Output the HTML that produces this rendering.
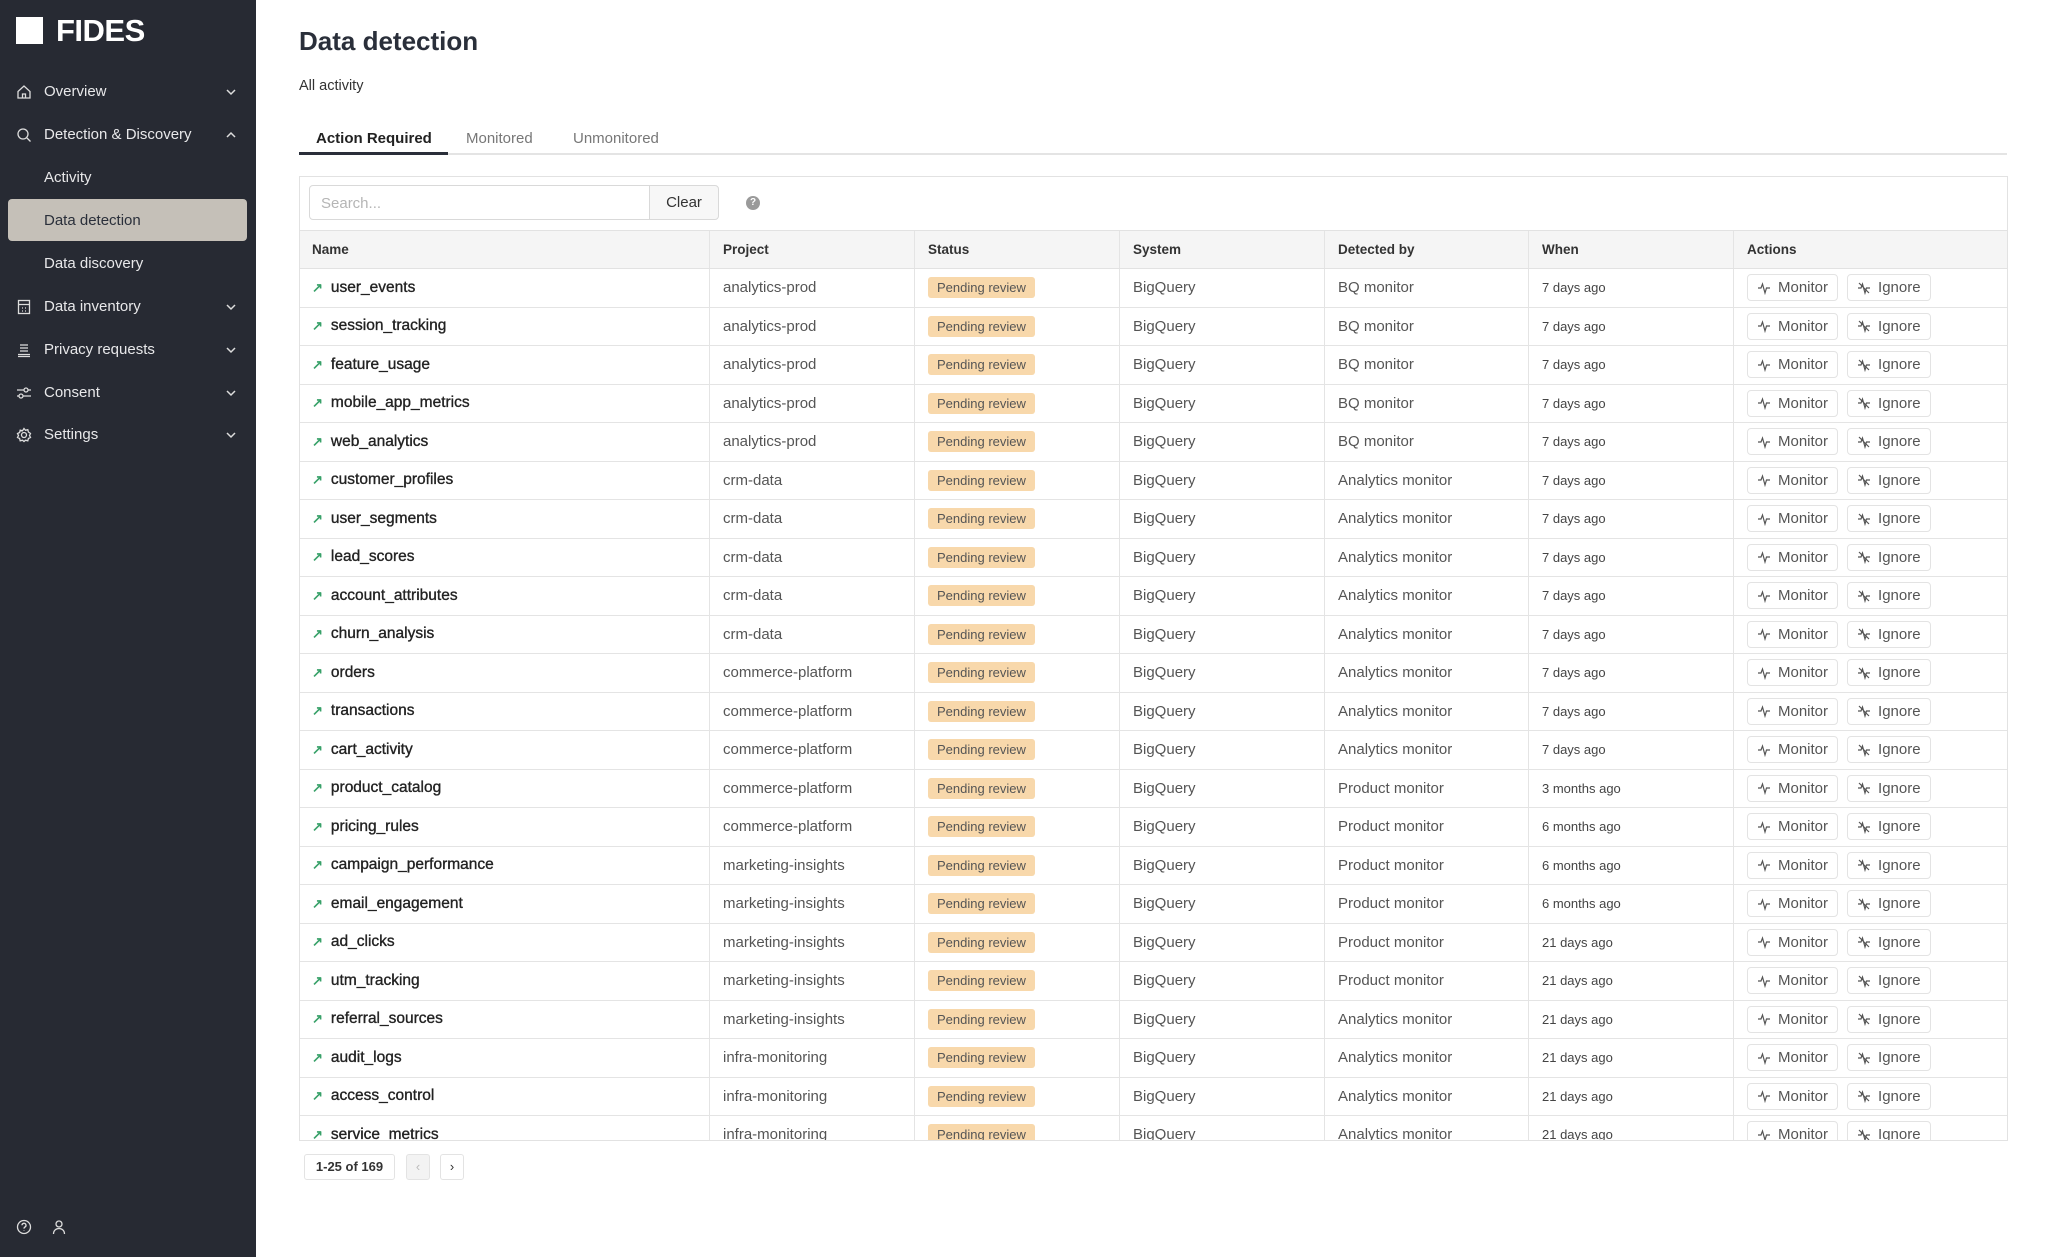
<!DOCTYPE html>
<html><head><meta charset="utf-8"><style>
*{box-sizing:border-box;margin:0;padding:0}
body{width:2048px;height:1257px;overflow:hidden;font-family:"Liberation Sans",sans-serif;background:#fff;color:#2a2f3a;position:relative}
.sb{position:absolute;left:0;top:0;width:256px;height:1257px;background:#272a33;color:#e8e8ea}
.logo{position:absolute;left:16px;top:17px;width:27px;height:27px;background:#fff}
.brand{position:absolute;left:56px;top:13px;font-size:31px;font-weight:bold;color:#fff;letter-spacing:-0.5px}
.nav{position:absolute;left:0;width:256px;height:40px;font-size:15px;line-height:40px}
.nav .t{position:absolute;left:44px}
.nav svg.i{position:absolute;left:16px;top:12px}
.nav .ch{position:absolute;left:225px;top:14px}
.hl{position:absolute;left:8px;top:199px;width:239px;height:42px;background:#c5c0b8;border-radius:4px}
h1{position:absolute;left:299px;top:26px;font-size:26px;font-weight:bold;color:#2a2f3a}
.sub{position:absolute;left:299px;top:78px;font-size:14.5px;color:#333}
.tabs{position:absolute;left:299px;top:127px;width:1708px;height:28px;border-bottom:2px solid #e4e4e4;font-size:15px}
.tabs span{position:absolute;top:3px;color:#777}
.tabs .a{color:#222;font-weight:bold;left:17px}
.ul{position:absolute;left:0;top:25px;width:149px;height:3px;background:#2a2f3a}
.box{position:absolute;left:299px;top:176px;width:1709px;height:965px;border:1.5px solid #e2e2e2;overflow:hidden}
.search{position:absolute;left:9px;top:8px;width:341px;height:35px;border:1.5px solid #d9d9d9;border-radius:4px 0 0 4px;font-size:15px;color:#b5b5b5;padding:9px 11px}
.clear{position:absolute;left:349px;top:8px;width:70px;height:35px;border:1.5px solid #d9d9d9;border-radius:0 4px 4px 0;background:#f7f7f7;font-size:15px;text-align:center;line-height:34px;color:#333}
.help{position:absolute;left:446px;top:19px;width:14px;height:14px;border-radius:50%;background:#9a9a9a;color:#fff;font-size:10px;font-weight:bold;text-align:center;line-height:14px}
.hdr{position:absolute;left:0;top:53px;width:1709px;height:39px;background:#f5f5f5;border-top:1.5px solid #e2e2e2;border-bottom:1.5px solid #e2e2e2;font-size:13.5px;font-weight:bold;color:#333}
.row{position:absolute;left:0;width:1709px;height:38.5px;border-bottom:1.5px solid #e4e4e4;font-size:15px}
.c{position:absolute;top:0;height:100%;border-right:1.5px solid #e4e4e4;padding-left:13px;display:flex;align-items:center;white-space:nowrap}
.c1{left:0;width:410px;padding-left:12px}.c2{left:410px;width:205px}.c3{left:615px;width:205px}.c4{left:820px;width:205px}.c5{left:1025px;width:204px}.c6{left:1229px;width:205px}.c7{left:1434px;width:274px;border-right:none}
.row .c1{color:#222;font-size:15.5px;-webkit-text-stroke:0.35px #222}
.row .c2,.row .c4,.row .c5{color:#555}
.row .c6{font-size:13px;color:#444}
.arr{color:#38a169;font-size:13px;margin-right:8px;font-weight:bold;-webkit-text-stroke:0}
.badge{background:#f8d8ab;color:#555;font-size:13px;padding:3px 9px;border-radius:3px}
.btn{height:27px;border:1.5px solid #e3e3e3;border-radius:4px;font-size:15px;color:#555;display:flex;align-items:center;padding:0 9px;margin-right:9px}
.btn svg{margin-right:7px}
.pg{position:absolute;top:1154px;height:26px;border:1.5px solid #e3e3e3;border-radius:3px;font-size:13px;font-weight:bold;line-height:23px;text-align:center;color:#333}
</style></head><body>
<div class="sb">
<div class="logo"></div><div class="brand">FIDES</div>
<div class="nav" style="top:72px"><svg class="i" width="16" height="16" viewBox="0 0 16 16" fill="none" stroke="#ddd" stroke-width="1.3"><path d="M2 7.5L8 2l6 5.5V14H2z M6.5 14V10h3v4"/></svg><span class="t">Overview</span><svg class="ch" width="12" height="12" viewBox="0 0 12 12" fill="none" stroke="#ddd" stroke-width="1.5"><path d="M2 4l4 4 4-4"/></svg></div>
<div class="nav" style="top:115px"><svg class="i" width="16" height="16" viewBox="0 0 16 16" fill="none" stroke="#ddd" stroke-width="1.3"><circle cx="7" cy="7" r="5"/><path d="M11 11l3.5 3.5"/></svg><span class="t">Detection &amp; Discovery</span><svg class="ch" width="12" height="12" viewBox="0 0 12 12" fill="none" stroke="#ddd" stroke-width="1.5"><path d="M2 8l4-4 4 4"/></svg></div>
<div class="nav" style="top:158px"><span class="t">Activity</span></div>
<div class="hl"></div>
<div class="nav" style="top:201px;color:#2a2f3a"><span class="t">Data detection</span></div>
<div class="nav" style="top:244px"><span class="t">Data discovery</span></div>
<div class="nav" style="top:287px"><svg class="i" width="16" height="16" viewBox="0 0 16 16" fill="none" stroke="#ddd" stroke-width="1.3"><rect x="2.5" y="1.5" width="11" height="13"/><path d="M2.5 5.5h11M6 9h1M9 9h1M6 12h1M9 12h1"/></svg><span class="t">Data inventory</span><svg class="ch" width="12" height="12" viewBox="0 0 12 12" fill="none" stroke="#ddd" stroke-width="1.5"><path d="M2 4l4 4 4-4"/></svg></div>
<div class="nav" style="top:330px"><svg class="i" width="16" height="16" viewBox="0 0 16 16" fill="none" stroke="#ddd" stroke-width="1.3"><path d="M4 3h8M4 6h8M4 9h8M2 12.5h12M2 14.5h12"/></svg><span class="t">Privacy requests</span><svg class="ch" width="12" height="12" viewBox="0 0 12 12" fill="none" stroke="#ddd" stroke-width="1.5"><path d="M2 4l4 4 4-4"/></svg></div>
<div class="nav" style="top:373px"><svg class="i" width="16" height="16" viewBox="0 0 16 16" fill="none" stroke="#ddd" stroke-width="1.3"><path d="M1 5h14M1 11h14"/><circle cx="10" cy="5" r="2" fill="#272a33"/><circle cx="5" cy="11" r="2" fill="#272a33"/></svg><span class="t">Consent</span><svg class="ch" width="12" height="12" viewBox="0 0 12 12" fill="none" stroke="#ddd" stroke-width="1.5"><path d="M2 4l4 4 4-4"/></svg></div>
<div class="nav" style="top:415px"><svg class="i" width="16" height="16" viewBox="0 0 16 16" fill="none" stroke="#ddd" stroke-width="1.3"><circle cx="8" cy="8" r="2.5"/><path d="M8 1.5l1.5 1.8 2.3-.6.6 2.3L14.5 6.5 13.5 8.5l1 2-2.1 1-.6 2.3-2.3-.6L8 14.5l-1.5-1.3-2.3.6-.6-2.3-2.1-1 1-2-1-2 2.1-1 .6-2.3 2.3.6z"/></svg><span class="t">Settings</span><svg class="ch" width="12" height="12" viewBox="0 0 12 12" fill="none" stroke="#ddd" stroke-width="1.5"><path d="M2 4l4 4 4-4"/></svg></div>
<svg style="position:absolute;left:16px;top:1219px" width="16" height="16" viewBox="0 0 16 16" fill="none" stroke="#ddd" stroke-width="1.3"><circle cx="8" cy="8" r="6.5"/><path d="M6 6.3a2 2 0 113 1.7c-.7.4-1 .8-1 1.6M8 11.5v.5"/></svg>
<svg style="position:absolute;left:51px;top:1219px" width="16" height="16" viewBox="0 0 16 16" fill="none" stroke="#ddd" stroke-width="1.3"><circle cx="8" cy="5" r="3"/><path d="M2.5 15c0-3.5 2.5-5.5 5.5-5.5s5.5 2 5.5 5.5"/></svg>
</div>
<h1>Data detection</h1>
<div class="sub">All activity</div>
<div class="tabs"><span class="a">Action Required</span><span style="left:167px">Monitored</span><span style="left:274px">Unmonitored</span><div class="ul"></div></div>
<div class="box">
<div class="search">Search...</div><div class="clear">Clear</div><div class="help">?</div>
<div class="hdr"><div class="c c1" style="padding-left:12px">Name</div><div class="c c2">Project</div><div class="c c3">Status</div><div class="c c4">System</div><div class="c c5">Detected by</div><div class="c c6">When</div><div class="c c7">Actions</div></div>
<div id="rows"></div>
</div>
<div class="pg" style="left:304px;width:91px">1-25 of 169</div>
<div class="pg" style="left:406px;width:24px;background:#f3f3f3;color:#bbb;font-weight:normal">‹</div>
<div class="pg" style="left:440px;width:24px;font-weight:normal">›</div>
<script>
var d=[["user_events","analytics-prod","BQ monitor","7 days ago"],["session_tracking","analytics-prod","BQ monitor","7 days ago"],["feature_usage","analytics-prod","BQ monitor","7 days ago"],["mobile_app_metrics","analytics-prod","BQ monitor","7 days ago"],["web_analytics","analytics-prod","BQ monitor","7 days ago"],["customer_profiles","crm-data","Analytics monitor","7 days ago"],["user_segments","crm-data","Analytics monitor","7 days ago"],["lead_scores","crm-data","Analytics monitor","7 days ago"],["account_attributes","crm-data","Analytics monitor","7 days ago"],["churn_analysis","crm-data","Analytics monitor","7 days ago"],["orders","commerce-platform","Analytics monitor","7 days ago"],["transactions","commerce-platform","Analytics monitor","7 days ago"],["cart_activity","commerce-platform","Analytics monitor","7 days ago"],["product_catalog","commerce-platform","Product monitor","3 months ago"],["pricing_rules","commerce-platform","Product monitor","6 months ago"],["campaign_performance","marketing-insights","Product monitor","6 months ago"],["email_engagement","marketing-insights","Product monitor","6 months ago"],["ad_clicks","marketing-insights","Product monitor","21 days ago"],["utm_tracking","marketing-insights","Product monitor","21 days ago"],["referral_sources","marketing-insights","Analytics monitor","21 days ago"],["audit_logs","infra-monitoring","Analytics monitor","21 days ago"],["access_control","infra-monitoring","Analytics monitor","21 days ago"],["service_metrics","infra-monitoring","Analytics monitor","21 days ago"]];
var mon='<svg width="14" height="14" viewBox="0 0 14 14" fill="none" stroke="#555" stroke-width="1.2"><path d="M1 7h3l1.5-4 2.5 9 1.5-5H13"/></svg>';
var ign='<svg width="14" height="14" viewBox="0 0 14 14" fill="none" stroke="#555" stroke-width="1.2"><path d="M1 7h3l1.5-4 2.5 9 1.5-5H13M2 2l10 10"/></svg>';
var h='';
d.forEach(function(r,i){h+='<div class="row" style="top:'+(92+i*38.5)+'px"><div class="c c1"><span class="arr">↗</span>'+r[0]+'</div><div class="c c2">'+r[1]+'</div><div class="c c3"><span class="badge">Pending review</span></div><div class="c c4">BigQuery</div><div class="c c5">'+r[2]+'</div><div class="c c6">'+r[3]+'</div><div class="c c7"><div class="btn">'+mon+'Monitor</div><div class="btn">'+ign+'Ignore</div></div></div>';});
document.getElementById('rows').innerHTML=h;
</script>
</body></html>
